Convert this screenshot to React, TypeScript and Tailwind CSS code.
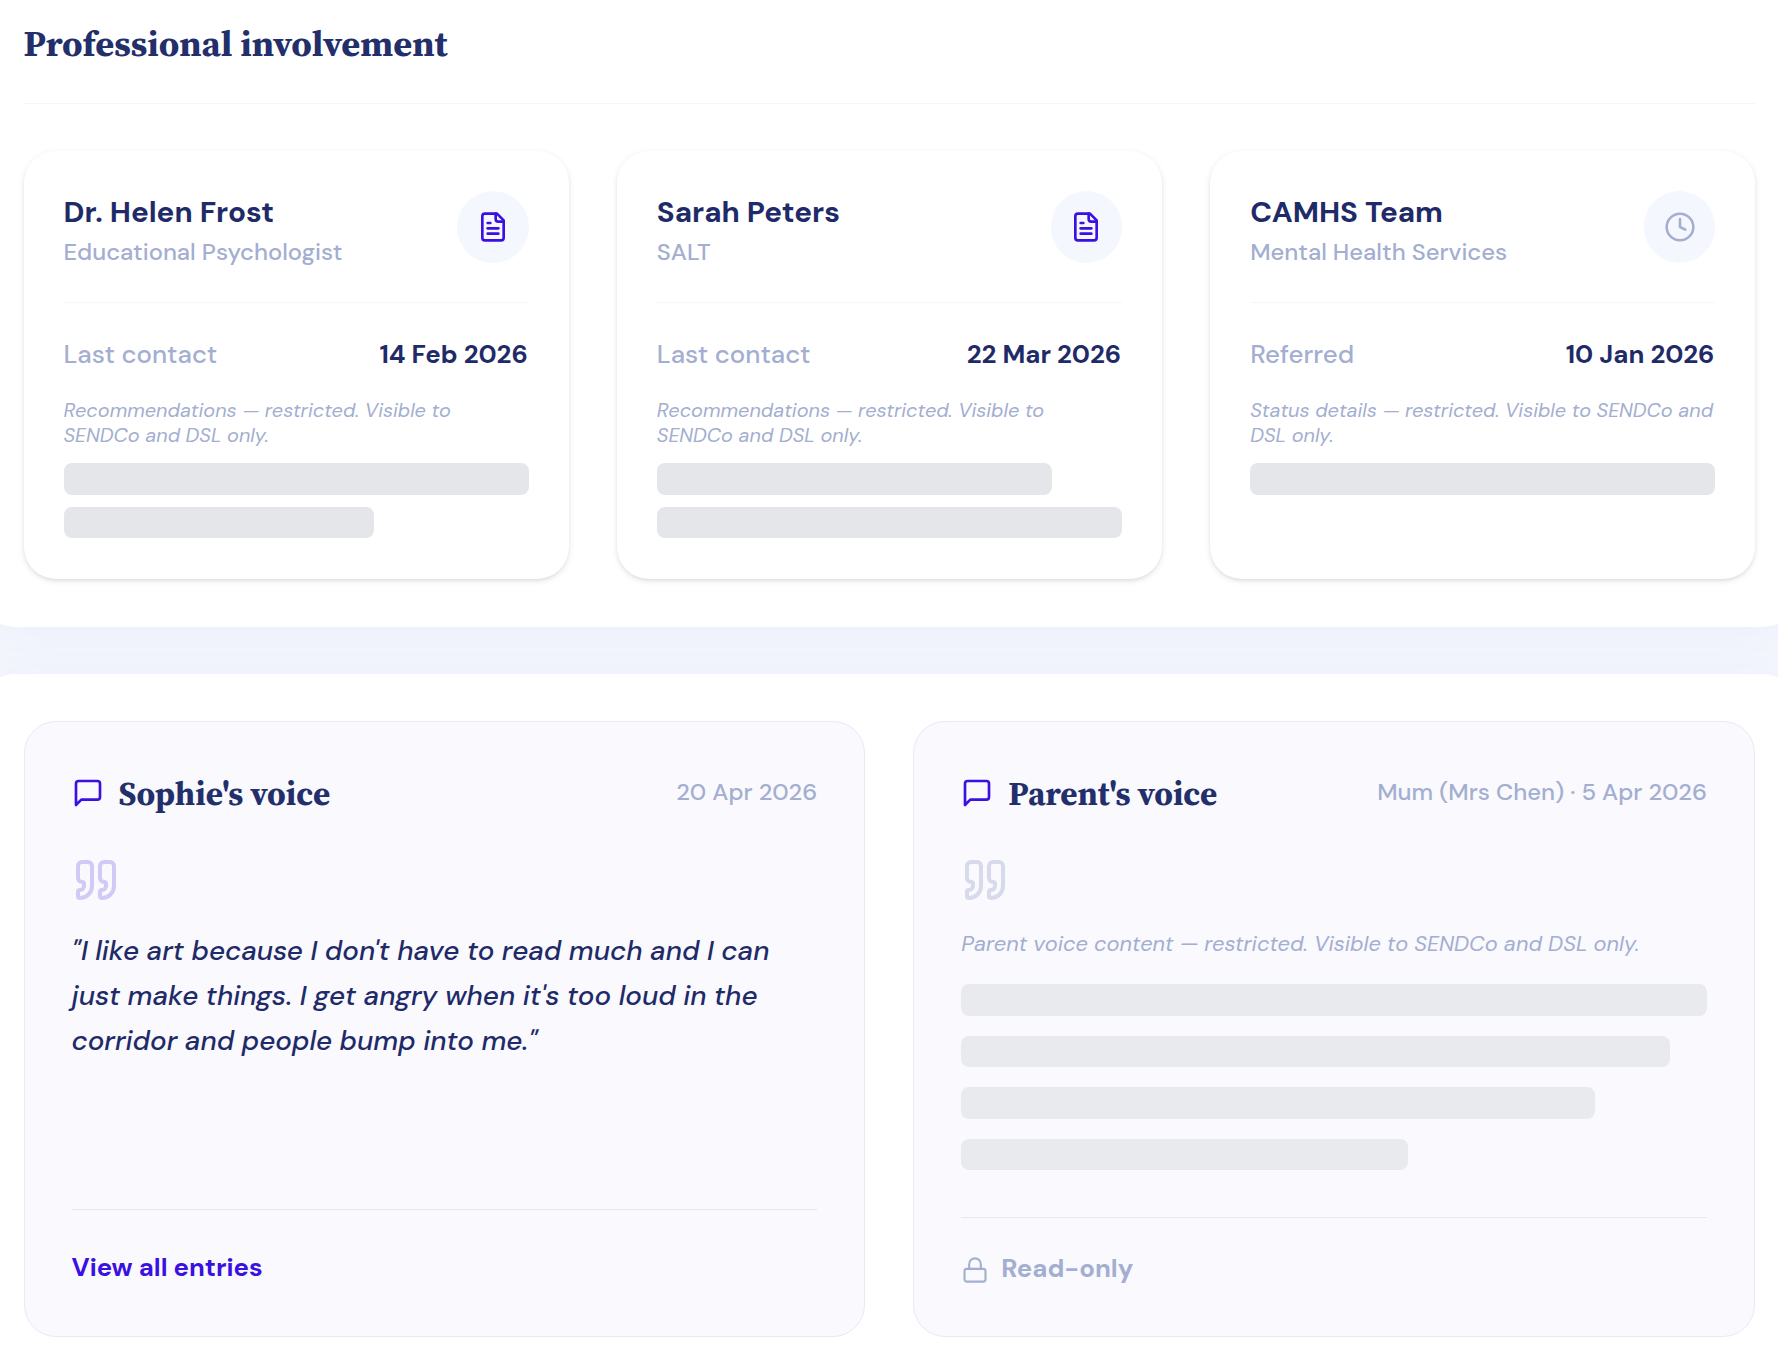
import { Clock, Lock, Quote } from "lucide-react";
import clsx from "clsx";

type Professional = {
  name: string;
  role: string;
  label: string;
  date: string;
  note: string;
  bars: string[];
  pending?: boolean;
};

const professionals: Professional[] = [
  {
    name: "Dr. Helen Frost",
    role: "Educational Psychologist",
    label: "Last contact",
    date: "14 Feb 2026",
    note: "Recommendations — restricted. Visible to SENDCo and DSL only.",
    bars: ["w-full", "w-2/3"],
  },
  {
    name: "Sarah Peters",
    role: "SALT",
    label: "Last contact",
    date: "22 Mar 2026",
    note: "Recommendations — restricted. Visible to SENDCo and DSL only.",
    bars: ["w-[85%]", "w-full"],
  },
  {
    name: "CAMHS Team",
    role: "Mental Health Services",
    label: "Referred",
    date: "10 Jan 2026",
    note: "Status details — restricted. Visible to SENDCo and DSL only.",
    bars: ["w-full"],
    pending: true,
  },
];

const parentBars = ["w-full", "w-[95%]", "w-[85%]", "w-[59.9%]"];

const iconProps = {
  viewBox: "0 0 24 24",
  fill: "none",
  stroke: "currentColor",
  strokeWidth: 2,
  strokeLinecap: "round",
  strokeLinejoin: "round",
} as const;

function FileIcon({ className }: { className?: string }) {
  return (
    <svg {...iconProps} className={className}>
      <path d="M15 2H6a2 2 0 0 0-2 2v16a2 2 0 0 0 2 2h12a2 2 0 0 0 2-2V7Z" />
      <path d="M14 2v4a2 2 0 0 0 2 2h4" />
      <path d="M10 9H8" />
      <path d="M16 13H8" />
      <path d="M16 17H8" />
    </svg>
  );
}

function MessageIcon({ className }: { className?: string }) {
  return (
    <svg {...iconProps} className={className}>
      <path d="M21 15a2 2 0 0 1-2 2H7l-4 4V5a2 2 0 0 1 2-2h14a2 2 0 0 1 2 2z" />
    </svg>
  );
}

function ProfessionalCard({ item }: { item: Professional }) {
  return (
    <div className="h-[428px] rounded-[32px] bg-white p-10 shadow-[0_2px_6px_rgba(0,0,0,0.1),0_2px_4px_-2px_rgba(0,0,0,0.1)]">
      <div className="flex h-[112px] items-start justify-between border-b border-[#f5f6fa]">
        <div className="pt-px">
          <h3 className="text-[29.6px] leading-10 font-bold text-[#1f2b68]">{item.name}</h3>
          <p className="mt-0.5 text-[23.8px] leading-9 font-medium text-[#a3aed0]">{item.role}</p>
        </div>
        <div className="flex size-[71.5px] items-center justify-center rounded-full bg-[#f4f7fe]">
          {item.pending ? (
            <Clock size={32} strokeWidth={1.9} className="text-[#a3aed0]" />
          ) : (
            <FileIcon className="size-8 text-[#3a11e0]" />
          )}
        </div>
      </div>

      <div className="mt-8 flex items-center justify-between text-[25.8px] leading-[38px]">
        <span className="font-medium text-[#a3aed0]">{item.label}</span>
        <span className="pr-px font-bold text-[#1f2b68]">{item.date}</span>
      </div>

      <p className="mt-[25px] text-[19.9px] leading-[25px] text-[#a3aed0] italic">{item.note}</p>
      <div className="mt-[15px] space-y-3">
        {item.bars.map((w, i) => (
          <div key={i} className={clsx("h-[31.5px] rounded-lg bg-[#e5e6ea]", w)} />
        ))}
      </div>
    </div>
  );
}

function VoiceHeader({ title, meta }: { title: string; meta: string }) {
  return (
    <div className="flex h-12 items-center justify-between">
      <div className="flex items-center gap-[15px]">
        <MessageIcon className="size-8 text-[#3a11e0]" />
        <h2 className="pt-0.5 font-['Source_Serif_4','Liberation_Serif',serif] text-[33.1px] leading-10 font-bold text-[#232f6b]">
          {title}
        </h2>
      </div>
      <span className="pb-0.5 text-[23.8px] leading-9 font-medium text-[#a3aed0]">{meta}</span>
    </div>
  );
}

export default function App() {
  return (
    <div className="h-[1363px] overflow-hidden bg-[#f4f7fe] font-['DM_Sans',Inter,sans-serif]">
      {/* Professional involvement */}
      <section className="-mx-6 h-[627px] rounded-b-[40px] bg-white pt-[23px] pr-[46.5px] pl-[47.5px] shadow-[0_4px_60px_rgba(20,20,90,0.04)]">
        <div className="h-[80.5px] border-b border-[#f6f7fa]">
          <h2 className="font-['Source_Serif_4','Liberation_Serif',serif] text-[36.4px] leading-10 font-bold text-[#232f6b]">
            Professional involvement
          </h2>
        </div>
        <div className="mt-[47.5px] grid grid-cols-3 gap-12">
          {professionals.map((item) => (
            <ProfessionalCard key={item.name} item={item} />
          ))}
        </div>
      </section>

      {/* Pupil and parent voice */}
      <section className="-mx-6 mt-[47px] h-[800px] rounded-t-[40px] bg-white pt-[47px] pr-[47px] pl-[47.5px] shadow-[0_4px_60px_rgba(20,20,90,0.04)]">
        <div className="grid h-[616px] grid-cols-2 gap-12">
          <div className="flex flex-col rounded-[32px] border border-[#e9e8f7] bg-[#f9f9fe] p-[47px]">
            <VoiceHeader title="Sophie's voice" meta="20 Apr 2026" />
            <Quote size={48} className="mt-[39px] shrink-0 text-[#3a11e0] opacity-20" />
            <p className="mt-[25px] text-[27.7px] leading-[44.8px] font-medium text-[#1f2b68] italic">
              "I like art because I don't have to read much and I can
              <br />
              just make things. I get angry when it's too loud in the
              <br />
              corridor and people bump into me."
            </p>
            <div className="mt-auto h-20 border-t border-[#e6e5f6] pt-[39px]">
              <a href="#" className="text-[25.7px] leading-[38px] font-bold text-[#3a11e0]">
                View all entries
              </a>
            </div>
          </div>

          <div className="flex flex-col rounded-[32px] border border-[#e9e8f7] bg-[#f9f9fe] p-[47px]">
            <VoiceHeader title="Parent's voice" meta="Mum (Mrs Chen) · 5 Apr 2026" />
            <Quote size={48} className="mt-[39px] shrink-0 text-[#a3aed0] opacity-40" />
            <p className="mt-[25px] text-[21.8px] leading-[30px] text-[#a3aed0] italic">
              Parent voice content — restricted. Visible to SENDCo and DSL only.
            </p>
            <div className="mt-[25px] space-y-5">
              {parentBars.map((w) => (
                <div key={w} className={clsx("h-[31.5px] rounded-lg bg-[#e9eaee]", w)} />
              ))}
            </div>
            <div className="mt-auto flex h-[72px] items-center gap-3 border-t border-[#e9e8f7] pt-[33px] text-[#a3aed0]">
              <Lock size={28} strokeWidth={1.8} />
              <span className="pb-[3px] text-[25.8px] leading-[35px] font-bold">Read-only</span>
            </div>
          </div>
        </div>
      </section>
    </div>
  );
}
